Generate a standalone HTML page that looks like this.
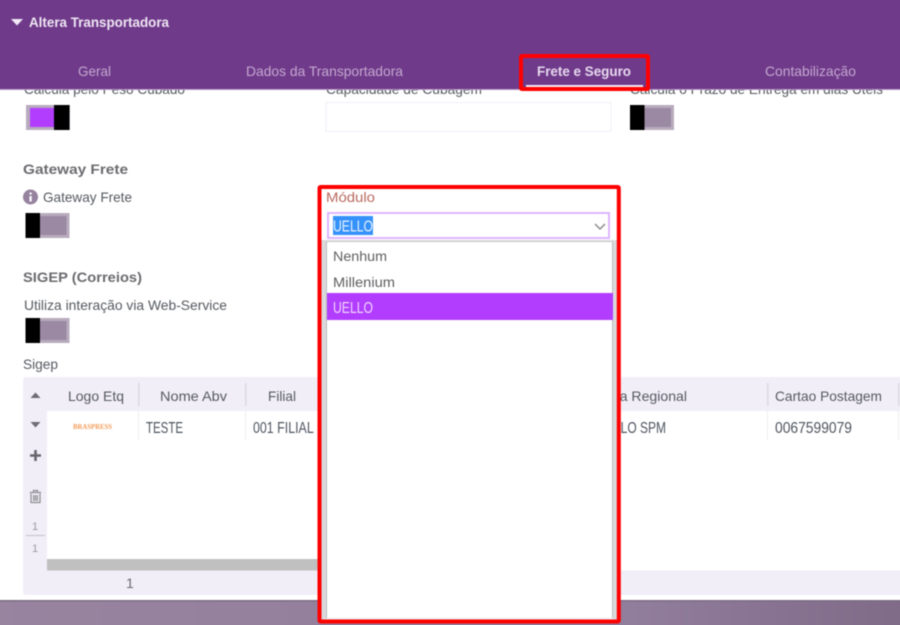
<!DOCTYPE html>
<html lang="pt">
<head>
<meta charset="utf-8">
<title>Altera Transportadora</title>
<style>
html,body{margin:0;padding:0;width:900px;height:625px;overflow:hidden;background:#fff}
#w{position:relative;width:900px;height:625px;overflow:hidden;contain:strict}
svg{display:block;position:absolute;left:-10px;top:-10px;filter:blur(.4px)}
text{font-family:"Liberation Sans",sans-serif;font-size:14px;fill:#555a60;white-space:pre}
.b{font-weight:bold}
.tab{fill:#c2a8cf}
.dk{fill:#4d5560;font-size:15.500px}
</style>
</head>
<body>
<div id="w">
<svg width="920" height="645" viewBox="-10 -10 920 645" xmlns="http://www.w3.org/2000/svg">
<defs>
<linearGradient id="bot" x1="0" x2="1" y1="0" y2="0">
<stop offset="0" stop-color="#98849f"/><stop offset=".7" stop-color="#917d9c"/><stop offset="1" stop-color="#7f6b88"/>
</linearGradient>
<g id="off">
<rect x="0" y="0" width="44" height="25" fill="#b7abbd"/>
<rect x="14" y="3" width="27" height="19" fill="#9b88a3"/>
<rect x="0" y="0" width="14.500" height="25" fill="#000"/>
</g>
</defs>

<rect x="-10" y="-10" width="920" height="645" fill="#fff"/>

<!-- clipped labels -->
<text x="24" y="94" textLength="161" lengthAdjust="spacingAndGlyphs">Calcula pelo Peso Cubado</text>
<text x="326" y="94" textLength="156" lengthAdjust="spacingAndGlyphs">Capacidade de Cubagem</text>
<text x="630" y="94" textLength="253" lengthAdjust="spacingAndGlyphs">Calcula o Prazo de Entrega em dias Úteis</text>

<!-- header -->
<rect x="-10" y="-10" width="920" height="99" fill="#703a8a"/>
<rect x="-10" y="89" width="920" height="1" fill="#b497c4"/>
<path d="M11 19H23L17 25.500Z" fill="#f1e9f5"/>
<text class="b" x="29" y="27" textLength="140" lengthAdjust="spacingAndGlyphs" style="fill:#eee6f3;font-size:14px">Altera Transportadora</text>
<text class="tab" x="78" y="76" textLength="33" lengthAdjust="spacingAndGlyphs">Geral</text>
<text class="tab" x="246" y="76" textLength="157" lengthAdjust="spacingAndGlyphs">Dados da Transportadora</text>
<text class="b" x="537" y="76" textLength="94" lengthAdjust="spacingAndGlyphs" style="fill:#e6d9ee;font-size:14px">Frete e Seguro</text>
<text class="tab" x="765" y="76" textLength="91" lengthAdjust="spacingAndGlyphs">Contabilização</text>
<rect x="526" y="85" width="117" height="2" fill="#f3eef6"/>
<rect x="521" y="56" width="127" height="33" fill="none" stroke="#f00" stroke-width="4" rx="1"/>

<!-- row 1 controls -->
<g transform="translate(26,105)">
<rect width="44" height="25" fill="#b7abbd"/>
<rect x="4" y="3" width="26" height="19" fill="#b23dff"/>
<rect x="28" width="15.500" height="25" fill="#000"/>
</g>
<rect x="326" y="102.500" width="285" height="29" fill="#fff" stroke="#f1effa"/>
<use href="#off" transform="translate(630,105)"/>

<!-- Gateway -->
<text class="b" x="23" y="174" textLength="105" lengthAdjust="spacingAndGlyphs" style="fill:#6b6b70">Gateway Frete</text>
<circle cx="30.500" cy="197" r="7.500" fill="#96829f"/>
<rect x="29.500" y="196" width="2.200" height="5.500" fill="#fff"/>
<rect x="29.500" y="192.500" width="2.200" height="2" fill="#fff"/>
<text x="43" y="202" textLength="89" lengthAdjust="spacingAndGlyphs">Gateway Frete</text>
<use href="#off" transform="translate(25.500,213)"/>

<!-- SIGEP -->
<text class="b" x="23" y="282" textLength="119" lengthAdjust="spacingAndGlyphs" style="fill:#6b6b70">SIGEP (Correios)</text>
<text x="24" y="310" textLength="203" lengthAdjust="spacingAndGlyphs">Utiliza interação via Web-Service</text>
<use href="#off" transform="translate(25.500,318)"/>
<text x="23" y="369" textLength="35" lengthAdjust="spacingAndGlyphs">Sigep</text>

<!-- grid -->
<rect x="23" y="377" width="890" height="218" rx="3" fill="#f2eef8"/>
<rect x="47" y="411" width="863" height="148" fill="#fff"/>
<rect x="47" y="559" width="575" height="11.500" fill="#c0c0c0"/>
<rect x="620" y="559" width="290" height="11.500" fill="#fff"/>
<g fill="#dcd8e0">
<rect x="138" y="383" width="1.500" height="23"/>
<rect x="245" y="383" width="1.500" height="23"/>
<rect x="767" y="383" width="1.500" height="23"/>
<rect x="898" y="383" width="1.500" height="23"/>
</g>
<g stroke="#dedede" stroke-dasharray="1 1" stroke-width="1">
<path d="M138.500 411V441M245.500 411V441M767.500 411V441M898.500 411V441"/>
</g>
<text x="68" y="401" textLength="56" lengthAdjust="spacingAndGlyphs">Logo Etq</text>
<text x="160" y="401" textLength="67" lengthAdjust="spacingAndGlyphs">Nome Abv</text>
<text x="268" y="401" textLength="28" lengthAdjust="spacingAndGlyphs">Filial</text>
<text x="615" y="401" textLength="72" lengthAdjust="spacingAndGlyphs">ra Regional</text>
<text x="775" y="401" textLength="107" lengthAdjust="spacingAndGlyphs">Cartao Postagem</text>
<text class="dk" x="146" y="433" textLength="37" lengthAdjust="spacingAndGlyphs">TESTE</text>
<text class="dk" x="253" y="433" textLength="72" lengthAdjust="spacingAndGlyphs">001 FILIAL P</text>
<text class="dk" x="612" y="433" textLength="54" lengthAdjust="spacingAndGlyphs">ULO SPM</text>
<text class="dk" x="775" y="433" textLength="77" lengthAdjust="spacingAndGlyphs">0067599079</text>
<text x="73" y="429" textLength="39" lengthAdjust="spacingAndGlyphs" style="font-family:'Liberation Serif',serif;font-size:7px;font-weight:bold;fill:#f39a55">BRASPRESS</text>

<!-- grid side tools -->
<path d="M30.500 398L35.500 392.500L40.500 398Z" fill="#6d6d72"/>
<path d="M30.500 422L40.500 422L35.500 427.500Z" fill="#6d6d72"/>
<path d="M35.500 450V461M30 455.500H41" stroke="#66666b" stroke-width="2.600" fill="none"/>
<path d="M31 493.500V502.500H40V493.500M29.800 492.500H41.200M33.500 492V490.500H37.500V492M33.700 495V501M35.500 495V501M37.300 495V501" fill="none" stroke="#8d8d92" stroke-width="1.200"/>
<text x="32" y="530" style="font-size:11px;fill:#9a9a9e">1</text>
<rect x="26" y="535" width="19" height="1" fill="#c4c1c8"/>
<text x="32" y="552" style="font-size:11px;fill:#9a9a9e">1</text>
<text x="126" y="588" style="fill:#6a6a6e">1</text>

<!-- modal bottom -->
<rect x="-10" y="600" width="920" height="35" fill="url(#bot)"/>
<rect x="-10" y="600" width="920" height="1.500" fill="#7c6c83"/>

<!-- Módulo -->
<text x="326" y="202" textLength="49" lengthAdjust="spacingAndGlyphs" style="fill:#b9695f">Módulo</text>
<rect x="328" y="213" width="281" height="25" fill="#fff" stroke="#dcb6ff" stroke-width="2"/>
<rect x="333" y="216" width="40" height="19" fill="#3592fa"/>
<text x="333" y="231.500" textLength="40" lengthAdjust="spacingAndGlyphs" style="fill:#e8f2ff;font-size:15.500px">UELLO</text>
<path d="M595 224L600 229L605 224" fill="none" stroke="#8b8b90" stroke-width="1.500"/>

<!-- dropdown list -->
<rect x="321" y="240" width="296" height="382" fill="#d9d9dc"/>
<rect x="326" y="241.500" width="287" height="378" fill="#bdbdc0"/>
<rect x="327" y="242" width="285" height="376" fill="#fff"/>
<rect x="326" y="618" width="287" height="2" fill="#e8e8e8"/>
<text x="333" y="261" textLength="54" lengthAdjust="spacingAndGlyphs" style="fill:#5f5f62">Nenhum</text>
<text x="333" y="287" textLength="62" lengthAdjust="spacingAndGlyphs" style="fill:#5f5f62">Millenium</text>
<rect x="327" y="293" width="286" height="27" fill="#b23dff"/>
<text x="333" y="313" textLength="40" lengthAdjust="spacingAndGlyphs" style="fill:#f0d4ff;font-size:15.500px">UELLO</text>

<!-- annotation frame -->
<rect x="319.500" y="187" width="299.300" height="434.500" fill="none" stroke="#f00" stroke-width="4" rx="1"/>
</svg>
</div>
</body>
</html>
